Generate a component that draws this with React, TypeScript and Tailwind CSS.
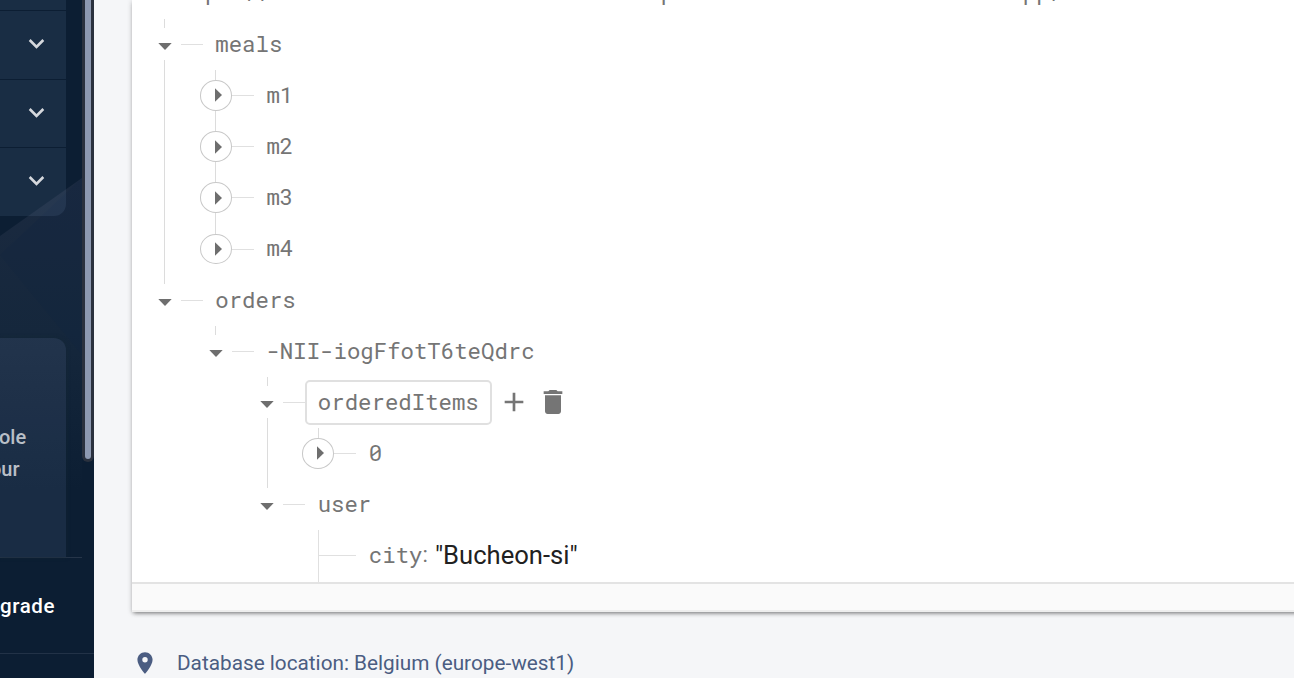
import { MdAdd, MdDelete, MdExpandMore, MdPlace } from 'react-icons/md'

type Toggle = 'open' | 'closed' | 'leaf'

interface TreeNode {
    name: string
    toggle: Toggle
    // one entry per ancestor column, true when its guide line runs through this row
    guides: boolean[]
    hasNext?: boolean
    selected?: boolean
    value?: string
}

const databaseUrl = 'https://eu-kimm-a1c-default-rtdb.europe-west1.firebasedatabase.app/'

const nodes: TreeNode[] = [
    { name: 'meals', toggle: 'open', guides: [], hasNext: true },
    { name: 'm1', toggle: 'closed', guides: [true], hasNext: true },
    { name: 'm2', toggle: 'closed', guides: [true], hasNext: true },
    { name: 'm3', toggle: 'closed', guides: [true], hasNext: true },
    { name: 'm4', toggle: 'closed', guides: [true] },
    { name: 'orders', toggle: 'open', guides: [] },
    { name: '-NII-iogFfotT6teQdrc', toggle: 'open', guides: [false] },
    { name: 'orderedItems', toggle: 'open', guides: [false, false], hasNext: true, selected: true },
    { name: '0', toggle: 'closed', guides: [false, false, true] },
    { name: 'user', toggle: 'open', guides: [false, false] },
    { name: 'city', toggle: 'leaf', guides: [false, false, false], hasNext: true, value: '"Bucheon-si"' },
]

function NodeToggle({ toggle, hasNext }: { toggle: Toggle; hasNext?: boolean }) {
    if (toggle === 'leaf') {
        return (
            <div className="flex w-8 shrink-0 items-center self-stretch pl-[15.5px]">
                <div className="w-px self-stretch bg-[#e0e0e0]" />
                <div className="h-px flex-1 bg-[#e0e0e0]" />
            </div>
        )
    }

    return (
        <div className="flex w-8 shrink-0 flex-col items-center self-stretch">
            <div className={`w-px bg-[#dcdcdc] ${toggle === 'open' ? 'h-[9px]' : 'h-2.5'}`} />
            {toggle === 'open' ? (
                <div className="flex h-8 items-center justify-center pt-[5px]">
                    <svg width="14" height="7" viewBox="0 0 14 7" fill="#6e6e6e">
                        <path d="M0.3 0h13.4L7 7z" />
                    </svg>
                </div>
            ) : (
                <div className="flex h-[30.5px] w-8 shrink-0 items-center justify-center rounded-[50%] border border-[#c8c8c8] bg-white pl-[5px]">
                    <svg width="7" height="14" viewBox="0 0 7 14" fill="#6e6e6e">
                        <path d="M0 0.3v13.4L7 7z" />
                    </svg>
                </div>
            )}
            {hasNext && <div className="w-px flex-1 bg-[#dcdcdc]" />}
        </div>
    )
}

function TreeRow({ node }: { node: TreeNode }) {
    return (
        <div className="flex h-[51.15px] items-center">
            {node.guides.map((line, i) => (
                <div key={i} className="flex w-[51.2px] shrink-0 self-stretch pl-[15.5px]">
                    {line && <div className="w-px bg-[#dcdcdc]" />}
                </div>
            ))}
            <NodeToggle toggle={node.toggle} hasNext={node.hasNext} />
            <div className={`h-px shrink-0 bg-[#e0e0e0] ${node.selected ? 'w-[22.3px]' : 'w-[21.9px]'}`} />
            {node.selected ? (
                <>
                    <div className="flex h-[45px] items-center rounded-[5px] border-2 border-[#e0e0e0] pr-[11.3px] pb-0.5 pl-[10.5px]">
                        {node.name}
                    </div>
                    <MdAdd className="mb-0.5 ml-1.5 shrink-0" size={32} />
                    <MdDelete className="mb-0.5 ml-[6.5px] shrink-0" size={32} />
                </>
            ) : (
                <div className="flex items-center pb-0.5 pl-[12.7px] whitespace-nowrap">
                    {node.name}
                    {node.value && (
                        <>
                            <span className="font-[Roboto,sans-serif]">:</span>
                            <span className="pl-[7px] font-[Roboto,sans-serif] text-[25.6px] leading-8 text-[#212121]">{node.value}</span>
                        </>
                    )}
                </div>
            )}
        </div>
    )
}

function Sidebar() {
    return (
        <aside className="relative flex h-full w-[94px] shrink-0 flex-col overflow-hidden bg-[#0c1e33]">
            <svg className="absolute top-0 left-0" width="82" height="500" viewBox="0 0 82 500">
                <defs>
                    <linearGradient id="facet" x1="0" y1="178" x2="0" y2="490" gradientUnits="userSpaceOnUse">
                        <stop offset="0" stopColor="#1b2a40" />
                        <stop offset="0.5" stopColor="#15273c" />
                        <stop offset="1" stopColor="#0c1e33" />
                    </linearGradient>
                </defs>
                <path d="M0 236L82 178V490H0z" fill="url(#facet)" />
                <path d="M0 255L82 355V178z" fill="#0f2440" opacity="0.25" />
            </svg>

            <div className="relative flex h-[558px] shrink-0">
                <div className="flex w-[82px] flex-col justify-between border-b border-[#263549]">
                    <div className="flex h-[216px] w-[66px] flex-col rounded-br-xl bg-[#a8c4f4]/9">
                        <div className="h-[11px] border-b border-[#0c1e33]" />
                        <div className="flex h-[69px] items-center justify-end border-b border-[#0c1e33] pr-3.5 pb-[3px]">
                            <MdExpandMore size={31} color="#d5d8dd" />
                        </div>
                        <div className="flex h-[68px] items-center justify-end border-b border-[#0c1e33] pr-3.5 pb-[3px]">
                            <MdExpandMore size={31} color="#d5d8dd" />
                        </div>
                        <div className="flex h-[68px] items-center justify-end pr-3.5 pb-[3px]">
                            <MdExpandMore size={31} color="#d5d8dd" />
                        </div>
                    </div>
                    <div className="flex h-[219px] w-[66px] flex-col items-start overflow-hidden rounded-tr-xl bg-[#a8c0f8]/9 pt-[83px] text-[20px] leading-8 font-medium text-[#b9bfc7] shadow-[0_0_4px_rgba(20,40,50,0.6)]">
                        <span className="-ml-px">ole</span>
                        <span className="-ml-2.5">our</span>
                    </div>
                </div>
                <div className="flex h-[462px] w-3 justify-center rounded-b-md bg-[#2a313e] pb-[3px]">
                    <div className="w-1.5 rounded-b-full bg-[#8d99b1]" />
                </div>
            </div>

            <div className="flex h-24 shrink-0 items-center border-b border-[#223247] pt-0.5 text-[20.5px] font-medium tracking-[0.6px] text-white">
                grade
            </div>
        </aside>
    )
}

export default function App() {
    return (
        <div className="flex h-[678px] w-[1294px] overflow-hidden bg-[#f5f6f8] font-[Roboto,sans-serif]">
            <Sidebar />
            <main className="flex min-w-0 flex-1 flex-col pl-[38px]">
                <section className="flex h-[612px] w-[1200px] shrink-0 flex-col border-b-2 border-[#eeeeee] bg-[#fafafa] shadow-[0_3px_4px_-2px_rgba(0,0,0,0.4),0_1px_5px_rgba(0,0,0,0.22)]">
                    <div className="flex h-[584px] flex-col overflow-hidden border-b-2 border-[#e3e3e3] bg-white pl-[16.7px] font-['Roboto_Mono','DejaVu_Sans_Mono',monospace] text-[22.35px] text-[#757575]">
                        {/* database root, scrolled out of view */}
                        <div className="flex h-[19px] shrink-0 items-end pb-[17px] pl-4 leading-[20px] whitespace-nowrap">
                            {databaseUrl}
                        </div>
                        {nodes.map((node) => (
                            <TreeRow key={node.name} node={node} />
                        ))}
                    </div>
                </section>
                <footer className="flex items-center gap-[19px] pt-[37px] text-[20.75px] leading-7 text-[#4b5d82]">
                    <MdPlace size={26} />
                    <span>Database location: Belgium (europe-west1)</span>
                </footer>
            </main>
        </div>
    )
}
